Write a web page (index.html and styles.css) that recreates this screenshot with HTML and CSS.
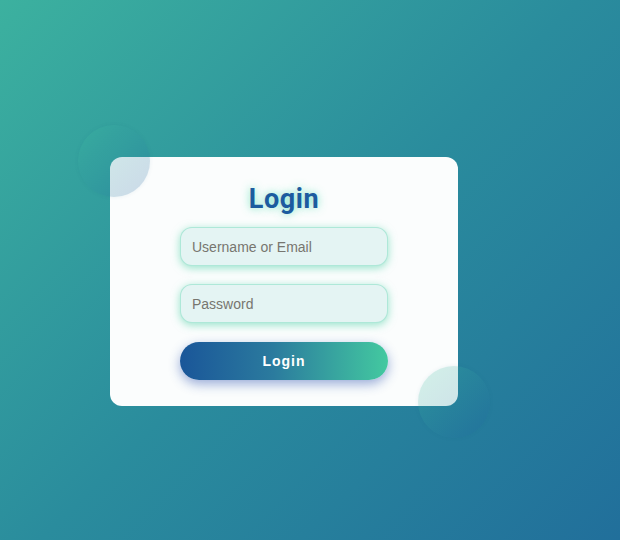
FILE: index.html
```html
<!DOCTYPE html>
<html>
<head>
<meta charset="utf-8">
<link rel="stylesheet" href="styles.css">
</head>
<body>
<div class="card">
  <span class="bubble bubble-tl"></span>
  <span class="bubble bubble-br"></span>
  <h1 class="title">Login</h1>
  <form class="form">
    <input class="field" type="text" placeholder="Username or Email">
    <input class="field" type="password" placeholder="Password">
    <button class="btn" type="button">Login</button>
  </form>
</div>
</body>
</html>
```
FILE: styles.css
```css
html, body {
  margin: 0;
  height: 100%;
}
body {
  background: linear-gradient(135deg, #3cb19f 0%, #2a8c9d 50%, #216f9b 100%);
  padding: 157px 0 0 110px;
  box-sizing: border-box;
  font-family: "Liberation Sans", Arial, sans-serif;
  overflow: hidden;
}
.card {
  position: relative;
  width: 348px;
  height: 249px;
  box-sizing: border-box;
  background: #fbfdfd;
  border-radius: 12px;
  padding: 25px 70px 0;
  display: flex;
  flex-direction: column;
  align-items: center;
}
.bubble {
  position: absolute;
  width: 72px;
  height: 72px;
  border-radius: 50%;
  background: linear-gradient(135deg, rgba(67, 201, 161, 0.22), rgba(29, 90, 160, 0.22));
  box-shadow: 0 0 4px rgba(20, 90, 130, 0.08);
  filter: blur(0.6px);
  pointer-events: none;
}
.bubble-tl {
  left: -32px;
  top: -32px;
}
.bubble-br {
  right: -32px;
  bottom: -32px;
}
.title {
  margin: 0 0 11px;
  font-family: Roboto, "Liberation Sans", sans-serif;
  font-weight: 700;
  font-size: 27px;
  line-height: 34px;
  color: #1c5c9f;
  letter-spacing: 0.6px;
  text-shadow: 0 0 8px rgba(67, 220, 170, 0.7);
}
.form {
  width: 100%;
  display: flex;
  flex-direction: column;
  gap: 18px;
}
.field {
  height: 39px;
  box-sizing: border-box;
  width: 100%;
  border: 1px solid rgba(120, 220, 190, 0.5);
  border-radius: 12px;
  background: #e4f4f3;
  padding: 0 11px;
  font-family: "Liberation Sans", Arial, sans-serif;
  font-size: 14px;
  color: #333;
  box-shadow: 0 2px 8px rgba(67, 205, 161, 0.55);
  outline: none;
}
.field::placeholder {
  color: #77766f;
}
.btn {
  margin-top: 1px;
  height: 38px;
  width: 100%;
  border: none;
  border-radius: 19px;
  background: linear-gradient(90deg, #1a5699 0%, #2b7b9e 45%, #43c9a0 100%);
  color: #ffffff;
  font-family: "Liberation Sans", Arial, sans-serif;
  font-weight: 700;
  font-size: 14px;
  letter-spacing: 1px;
  box-shadow: 0 4px 12px rgba(30, 70, 170, 0.45);
  cursor: pointer;
}
```
